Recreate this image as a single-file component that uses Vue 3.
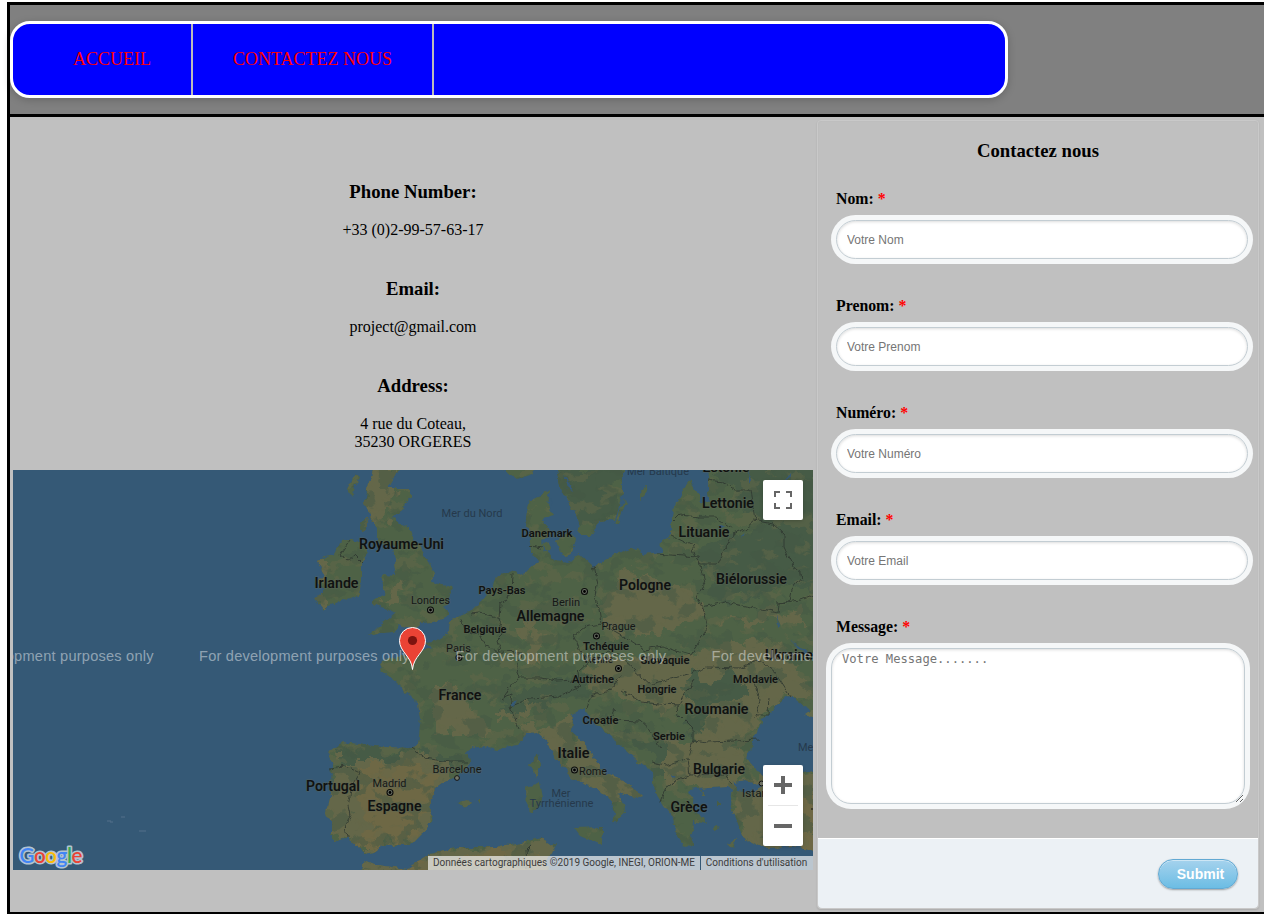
<script setup>
import { ref } from 'vue'

const fields = ref([
  { id: 'nom', label: 'Nom:', hint: 'Votre Nom' },
  { id: 'prenom', label: 'Prenom:', hint: 'Votre Prenom' },
  { id: 'numero', label: 'Numéro:', hint: 'Votre Numéro' },
  { id: 'email', label: 'Email:', hint: 'Votre Email' }
])

// [text, centre x, baseline, width, size]
const countries = [
  ['Royaume-Uni', 401.5, 548.5, 85, 14], ['Irlande', 336.5, 588, 44, 14], ['Danemark', 547, 537, 51, 11.5],
  ['Pays-Bas', 502, 594, 47, 11.5], ['Belgique', 485, 633, 43, 11.5], ['Allemagne', 550.5, 620.5, 68, 14],
  ['Pologne', 645, 589.5, 52, 14], ['Lettonie', 728, 508, 52, 14], ['Lituanie', 704, 536.5, 51, 14],
  ['Estonie', 726, 471.5, 47, 13], ['Biélorussie', 751.5, 583.5, 71, 14], ['Tchéquie', 606, 650, 46, 11.5],
  ['Slovaquie', 665, 664, 49, 11.5], ['Ukraine', 789, 659.5, 48, 14], ['Autriche', 593, 683, 42, 11.5],
  ['Hongrie', 657, 693, 39, 11.5], ['Moldavie', 755.5, 682.5, 45, 11.5], ['France', 460, 700, 43, 14],
  ['Roumanie', 716.5, 713.5, 64, 14], ['Croatie', 600.5, 724, 36, 11.5], ['Serbie', 669, 740, 32, 11.5],
  ['Italie', 573.5, 758, 32, 14], ['Bulgarie', 719, 774, 52, 14], ['Grèce', 689, 811.5, 37, 14],
  ['Portugal', 333, 791, 54, 14], ['Espagne', 394.5, 811, 54, 14]
]
const cities = [
  ['Londres', 430.5, 604, 39], ['Berlin', 566, 605.5, 28], ['Prague', 618.5, 630, 34], ['Paris', 458.5, 651.5, 25],
  ['Vienne', 598, 663, 30], ['Madrid', 389.5, 787, 34], ['Barcelone', 457, 773, 49], ['Rome', 593, 774.5, 28],
  ['Istanbul', 763, 797, 42]
]
const seas = [
  ['Mer du Nord', 472, 517, 61], ['Mer Baltique', 658, 475, 62], ['Mer', 561, 796.5, 19],
  ['Tyrrhénienne', 561.5, 807, 64], ['Mer Noire', 822, 751, 48]
]
const dots = [[430.5, 610], [584.5, 591.5], [596.5, 636], [618.5, 668.5], [459, 657.5], [390, 792.5], [574.5, 770]]
const notices = [-57, 199, 455.5, 711.5]
const letters = [['G', '#4285f4'], ['o', '#ea4335'], ['o', '#fbbc05'], ['g', '#4285f4'], ['l', '#34a853'], ['e', '#ea4335']]
</script>

<template>
  <div class="page">
    <header>
      <nav>
        <a>ACCUEIL</a>
        <a>CONTACTEZ NOUS</a>
      </nav>
    </header>

    <main>
      <section class="info">
        <h3>Phone Number:</h3>
        <p>+33 (0)2-99-57-63-17</p>
        <h3>Email:</h3>
        <p>project@gmail.com</p>
        <h3>Address:</h3>
        <p>4 rue du Coteau,<br />35230 ORGERES</p>

        <div class="map">
          <svg class="canvas" width="800" height="400" viewBox="13 470 800 400">
            <defs>
              <filter id="coast" x="0" y="0" width="1" height="1" color-interpolation-filters="sRGB">
                <feTurbulence type="fractalNoise" baseFrequency="0.12" numOctaves="3" seed="4" />
                <feDisplacementMap in="SourceGraphic" scale="7" xChannelSelector="R" yChannelSelector="G" />
              </filter>
              <filter id="patchy" x="-0.2" y="-0.2" width="1.4" height="1.4" color-interpolation-filters="sRGB">
                <feTurbulence type="fractalNoise" baseFrequency="0.05" numOctaves="3" seed="11" />
                <feDisplacementMap in="SourceGraphic" scale="34" xChannelSelector="R" yChannelSelector="G" />
              </filter>
              <filter id="forest" x="0" y="0" width="1" height="1" color-interpolation-filters="sRGB">
                <feTurbulence type="fractalNoise" baseFrequency="0.045 0.06" numOctaves="3" seed="23" />
                <feColorMatrix values="0 0 0 0 0.265  0 0 0 0 0.35  0 0 0 0 0.27  18 0 0 0 -10" />
              </filter>
              <filter id="field" x="0" y="0" width="1" height="1" color-interpolation-filters="sRGB">
                <feTurbulence type="fractalNoise" baseFrequency="0.05 0.07" numOctaves="3" seed="37" />
                <feColorMatrix values="0 0 0 0 0.4  0 0 0 0 0.41  0 0 0 0 0.285  0 18 0 0 -10.3" />
              </filter>
              <path id="land" d="M550 490L543 495L528 502L525 518L530 532L532 552L538 562L530 568L523 575L513 570L497 577L492 585L487 595L480 602L470 612L450 620L449 632L438 640L425 643L433 648L423 650L418 641L411 641L414 655L400 655L382 661L380 670L390 678L400 685L410 697L418 703L420 718L417 745L412 748L383 747L363 745L343 742L328 752L333 765L332 788L325 815L332 820L332 840L347 839L358 845L365 855L373 853L383 845L410 845L423 832L433 817L428 808L435 788L443 782L457 777L470 765L467 752L477 746L497 750L517 745L527 733L537 732L548 742L555 758L573 777L593 788L608 795L615 812L613 825L622 817L625 808L618 792L638 798L642 797L627 783L608 775L593 758L587 745L572 732L573 715L585 708L588 715L603 730L620 745L640 762L653 772L655 792L663 805L673 818L675 832L683 845L693 848L692 832L693 822L707 825L696 810L694 800L689 790L707 788L727 787L733 790L730 805L737 822L743 838L763 848L793 847L820 852L820 465L709 465L708 492L710 503L702 502L690 480L675 502L672 515L672 535L660 545L663 553L643 555L637 547L615 555L593 567L580 555L567 562L555 560L546 552L540 543L550 532L543 518L555 515L548 505Z
                M375 465L368 485L365 502L370 518L378 528L378 543L393 548L395 562L397 576L382 575L382 580L385 593L373 600L373 605L385 608L396 613L390 618L378 627L368 637L382 633L393 632L398 624L407 627L417 627L420 623L433 622L445 618L448 613L442 607L448 602L451 593L450 587L438 583L431 582L435 573L430 565L422 552L413 537L410 528L400 524L392 518L400 512L410 497L410 489L388 489L393 480L399 465Z
                M340 542L353 538L365 547L369 553L362 562L362 582L360 595L343 600L323 610L314 598L325 588L317 582L324 575L317 562L325 557L335 555Z
                M555 465L560 485L567 498L577 518L580 535L592 535L597 522L615 520L623 492L623 465Z
                M496 465L517 480L532 475L538 465Z M556 541L568 533L576 540L573 550L568 558L560 552Z M540 544L548 542L552 549L544 553Z
                M538 755L541 765L535 777L530 765Z M526 788L540 782L543 798L533 814L527 808Z
                M575 828L603 827L603 845L580 835Z
                M360 875L365 860L377 865L407 869L430 853L460 847L497 847L520 842L543 838L548 845L557 843L547 858L548 875Z
                M615 523L624 499L626 502L618 524Z M640 493L647 485L645 496L640 500Z
                M458 803L467 800L471 804L464 808Z M476 799L480 799L480 801Z
                M347 490L356 474L360 477L352 498Z M358 526L367 517L368 526L363 532Z M700 790L706 795L701 795Z M718 800L722 805L717 805Z M714 825L719 827L714 829Z M729 843L735 840L734 848Z" />
              <clipPath id="landclip"><use href="#land" /></clipPath>
            </defs>
            <rect x="13" y="470" width="800" height="400" fill="#355976" />
            <g filter="url(#coast)">
              <rect x="13" y="470" width="800" height="400" fill="none" />
              <use href="#land" fill="#4e6246" />
              <g clip-path="url(#landclip)">
                <g filter="url(#patchy)">
                  <path fill="#646749" d="M620 575L690 588L700 625L620 640L600 610ZM525 735L555 720L630 770L650 805L600 800ZM560 685L540 710L500 725L500 715ZM580 665L770 640L820 690L770 705L740 745L690 745L700 700L660 708L600 690ZM430 690L470 690L490 735L430 735ZM340 755L460 752L430 835L345 850L320 800ZM655 745L750 745L730 790L665 785ZM735 780L820 770L820 860L740 855ZM360 850L560 840L560 880L360 880ZM520 625L550 630L535 665ZM720 620L800 605L810 625ZM370 470L402 470L388 515L370 525ZM310 560L325 550L330 605L312 600ZM380 600L405 580L410 592L392 602Z" />
                  <path fill="#6e6845" d="M360 765L425 765L440 785L405 845L350 850L370 815L355 800ZM770 800L820 790L820 860L770 850ZM400 860L540 850L540 880L400 880Z" />
                  <path fill="#465b46" d="M550 465L625 465L610 525L580 535ZM705 465L820 465L820 590L715 600L695 555L760 520ZM690 680L735 675L740 695L710 720L685 735ZM595 715L665 745L665 780L650 760ZM500 695L590 670L590 690L500 715ZM330 745L410 748L400 760L340 760ZM415 745L465 755L462 765L430 760Z" />
                </g>
                <rect x="13" y="470" width="800" height="400" filter="url(#field)" opacity="0.45" />
                <rect x="13" y="470" width="800" height="400" filter="url(#forest)" opacity="0.5" />
              </g>
              <path fill="#355976" d="M789 694L780 702L762 720L752 745L747 758L757 772L780 779L820 768L820 712L807 716L808 708ZM733 782L746 780L762 787L752 793L738 791Z" />
              <path fill="#62694a" d="M804 713L820 702L820 718L811 718Z" />
              <g class="frontier">
                <path d="M350 540L340 555L348 561L355 555L362 562M530 546L541 548M513 573L512 595L500 603L499 619L492 616L480 613L472 614M461 619L464 629L480 636L486 646L500 651L520 652L517 672L519 678L510 688L503 698M499 619L503 635L497 641L500 651M593 565L597 585L594 600L600 610L602 624L584 627L573 635L582 655L590 661L578 672L580 684M602 624L625 637L645 650L662 647L690 655L707 628L703 611L697 596L705 585L698 557L657 554" />
                <path d="M672 536L691 545L694 555L701 564L718 564L725 548L733 534L745 529L755 520L750 490L735 490L722 482L708 480M673 522L680 515L700 517L716 517L733 528M752 520L773 524L784 534L784 547L795 570L803 577L792 590L790 600L780 603L779 613L755 609L725 602L702 607" />
                <path d="M519 678L540 678L556 681L576 680L582 686L560 696L530 698L510 707L519 730M503 698L512 695L510 707M590 661L608 651L620 656L635 670L651 684L692 673L707 667L740 668L760 660L775 672L790 695M586 707L590 696L610 690L622 675M622 690L640 702L660 704L678 705L694 680M615 710L610 720L640 721L650 730L660 747M677 705L678 715L693 730L693 740L708 742L760 740M693 740L688 758L666 765L650 762M688 758L690 775L666 786L660 802M690 775L726 774L731 785M755 682L760 700L755 715L768 715L769 697" />
                <path d="M412 748L425 758L450 762L467 762M331 768L345 766L360 773L352 786L348 806L350 815L345 825L347 839M527 870L526 850L532 844M778 603L800 600L813 595" />
              </g>
              <g fill="#355976">
                <path d="M748 470L752 482L749 483ZM784 480L790 473L792 478ZM777 614L780 625L778 627ZM790 640L810 654L806 656ZM745 532L742 538L741 535ZM552 498L546 503L550 507Z" />
                <path d="M565 475L572 492L568 490ZM718 525L724 527L721 530ZM671 775L677 777L672 779ZM510 704L517 700L514 706Z" />
              </g>
            </g>
            <g class="islet"><path d="M107 821h4M110 822h3M121 817h4M139 831h7" /></g>

            <g class="sea">
              <text v-for="s in seas" :key="s[0]" :x="s[1]" :y="s[2]" :textLength="s[3]" lengthAdjust="spacingAndGlyphs">{{ s[0] }}</text>
            </g>
            <g class="city">
              <text v-for="c in cities" :key="c[0]" :x="c[1]" :y="c[2]" :textLength="c[3]" lengthAdjust="spacingAndGlyphs">{{ c[0] }}</text>
              <g v-for="(d, i) in dots" :key="i">
                <circle :cx="d[0]" :cy="d[1]" r="3" class="ring" /><circle :cx="d[0]" :cy="d[1]" r="1.4" class="core" />
              </g>
              <circle cx="457" cy="778" r="2.4" class="open" /><circle cx="761.5" cy="783.5" r="2.4" class="open" />
              <path d="M811 809h3" stroke="#111" />
            </g>
            <g class="country">
              <text v-for="c in countries" :key="c[0]" :x="c[1]" :y="c[2]" :textLength="c[3]" :font-size="c[4]" lengthAdjust="spacingAndGlyphs">{{ c[0] }}</text>
            </g>
            <g class="notice">
              <text v-for="n in notices" :key="n" :x="n" y="661" textLength="210.500">For development purposes only</text>
            </g>
            <path d="M412.500 669.500C411.500 656 399.500 652 399.500 640.500A13 13 0 0 1 425.500 640.500C425.500 652 413.500 656 412.500 669.500Z" fill="#ea4335" stroke="#fff" stroke-width="1" />
            <circle cx="412.500" cy="640.500" r="4.600" fill="#7d130f" />
            <g class="halo">
              <text class="google" x="19.500" y="862.500" textLength="63">Google</text>
            </g>
            <text class="google" x="19.500" y="862.500" textLength="63" aria-hidden="true"><tspan v-for="(l, i) in letters" :key="i" :fill="l[1]">{{ l[0] }}</tspan></text>
          </svg>
          <div class="credits">
            <span>Données cartographiques ©2019 Google, INEGI, ORION-ME</span>
            <span>Conditions d'utilisation</span>
          </div>
          <button class="full" type="button" aria-label="Plein écran">
            <svg width="18" height="18" viewBox="0 0 18 18"><path d="M1 6V1H6M12 1H17V6M17 12V17H12M6 17H1V12" fill="none" stroke="#666" stroke-width="2" /></svg>
          </button>
          <div class="zoom">
            <button type="button" aria-label="Zoom avant">
              <svg width="18" height="18" viewBox="0 0 18 18"><path d="M0 9H18M9 0V18" stroke="#666" stroke-width="4" /></svg>
            </button>
            <i></i>
            <button type="button" aria-label="Zoom arrière">
              <svg width="18" height="18" viewBox="0 0 18 18"><path d="M0 9H18" stroke="#666" stroke-width="4" /></svg>
            </button>
          </div>
        </div>
      </section>

      <form @submit.prevent>
        <h3>Contactez nous</h3>
        <div v-for="f in fields" :key="f.id" class="field">
          <label :for="f.id">{{ f.label }} <em>*</em></label>
          <input :id="f.id" type="text" :placeholder="f.hint" />
        </div>
        <div class="field message">
          <label for="message">Message: <em>*</em></label>
          <textarea id="message" placeholder="Votre Message......."></textarea>
        </div>
        <footer><button type="submit">Submit</button></footer>
      </form>
    </main>
  </div>
</template>

<style>
html, body { overflow: hidden; background: #fff; }
</style>

<style scoped>
.page {
  box-sizing: border-box;
  width: 1260px;
  height: 913px;
  margin: 2px 0 0 7px;
  border: 3px solid #000;
  border-right: 0;
  background: #c0c0c0;
  color: #000;
  font: 16px/18px "Liberation Serif", "Times New Roman", serif;
}
header {
  box-sizing: border-box;
  height: 112px;
  padding-top: 16px;
  border-bottom: 3px solid #000;
  background: #808080;
}
nav {
  box-sizing: border-box;
  display: flex;
  width: 998px;
  height: 77px;
  padding-left: 20px;
  border: 3px solid #fff;
  border-radius: 20px;
  background: #00f;
  box-shadow: 0 2px 8px rgba(0, 0, 0, 0.2);
}
nav a {
  padding: 0 40px;
  border-right: 2px solid #bbb;
  color: #f00;
  font-size: 18px;
  line-height: 71px;
}
main { display: flex; }
.info { width: 800px; padding: 64px 0 0 3px; text-align: center; }
h3 { margin: 0; font-size: 18.72px; line-height: 21px; }
p { margin: 19px 0 39px; }
.info p:last-of-type { margin-bottom: 19px; }
.map { position: relative; width: 800px; height: 400px; overflow: hidden; }
.canvas { display: block; }
.canvas text { font-family: Roboto, sans-serif; text-anchor: middle; }
.frontier { fill: none; stroke: #2f3830; stroke-width: 1; opacity: 0.85; }
.islet { fill: none; stroke: #54718a; stroke-width: 1; }
.country text { fill: #101211; font-weight: 600; stroke: #5d655a; stroke-width: 1.5; stroke-opacity: 0.45; paint-order: stroke; }
.city text { fill: #151816; font-size: 11px; stroke: #5d655a; stroke-width: 1.5; stroke-opacity: 0.4; paint-order: stroke; }
.sea text { fill: #26394c; font-size: 11px; }
.ring { fill: #6b7166; stroke: #0b0c0b; stroke-width: 1.1; }
.core { fill: #000; }
.open { fill: #737768; stroke: #151515; stroke-width: 1; }
.canvas .notice text { fill: #fff; fill-opacity: 0.46; font: 14.6px "Liberation Sans", Arial, sans-serif; text-anchor: start; }
.canvas .google { font: 600 20.5px Lato, sans-serif; text-anchor: start; }
.halo text { fill: #b3c3d1; stroke: #b3c3d1; stroke-width: 3.2; stroke-linejoin: round; }
.credits {
  position: absolute;
  right: 0;
  bottom: 0;
  display: flex;
  height: 14px;
  color: #3c3c3c;
  font: 10px/14px Roboto, Arial, sans-serif;
  white-space: nowrap;
}
.credits span { box-sizing: border-box; width: 272px; background: rgba(245, 245, 245, 0.7); }
.credits span + span { width: 112px; margin-left: 1px; padding-right: 1px; }
.full, .zoom {
  position: absolute;
  right: 10px;
  width: 40px;
  border: 0;
  border-radius: 2px;
  background: #fff;
  box-shadow: 0 1px 4px -1px rgba(0, 0, 0, 0.3);
}
.full { top: 10px; display: grid; height: 40px; padding: 0; place-items: center; }
.zoom { bottom: 24px; height: 81px; }
.zoom button { display: grid; width: 40px; height: 40px; padding: 0; border: 0; background: none; place-items: center; }
.zoom i { display: block; width: 30px; height: 1px; margin: 0 auto; background: #e6e6e6; }

form {
  box-sizing: border-box;
  display: flex;
  flex-direction: column;
  width: 442px;
  height: 789px;
  margin: 3px 0 0 4px;
  border: 1px solid #c9c9c9;
  border-radius: 4px;
  box-shadow: inset 0 0 1px #aaa, 0 1px 2px rgba(0, 0, 0, 0.12);
}
form h3 { margin-top: 19px; text-align: center; }
.field { display: flex; flex-direction: column; height: 107px; padding-left: 18px; }
h3 + .field { margin-top: 29px; }
label { margin-bottom: 12px; font-weight: bold; font-size: 15.8px; }
em { color: #f00; font-style: normal; }
input, textarea {
  box-sizing: border-box;
  width: 412px;
  height: 39px;
  padding: 0 10px;
  border: 1px solid #c3cdd3;
  border-radius: 20px;
  outline: 0;
  background: #fff;
  box-shadow: inset 0 1px 3px rgba(0, 0, 0, 0.14), 0 0 0 5px #f5f7f8;
  font: 12px "Liberation Sans", Arial, sans-serif;
}
input::placeholder, textarea::placeholder { color: #757575; }
textarea {
  width: 414px;
  height: 156px;
  margin-left: -5px;
  padding: 3px 10px;
  font: 12.15px/15px "DejaVu Sans Mono", monospace;
}
.message { height: auto; }
footer {
  box-sizing: border-box;
  display: flex;
  justify-content: flex-end;
  height: 70px;
  margin-top: auto;
  padding: 20px 20px 0 0;
  border-top: 1px solid #fff;
  border-radius: 0 0 4px 4px;
  background: #ecf1f5;
}
footer button {
  box-sizing: border-box;
  width: 80px;
  height: 30px;
  padding: 0 0 0 5px;
  border: 1px solid #62a9d3;
  border-radius: 15px;
  background: linear-gradient(#a5d2ed, #6cbde4);
  box-shadow: inset 0 1px 0 rgba(255, 255, 255, 0.45), 0 1px 2px rgba(0, 0, 0, 0.35);
  color: #fff;
  font: bold 14px "Liberation Sans", Arial, sans-serif;
}
</style>
